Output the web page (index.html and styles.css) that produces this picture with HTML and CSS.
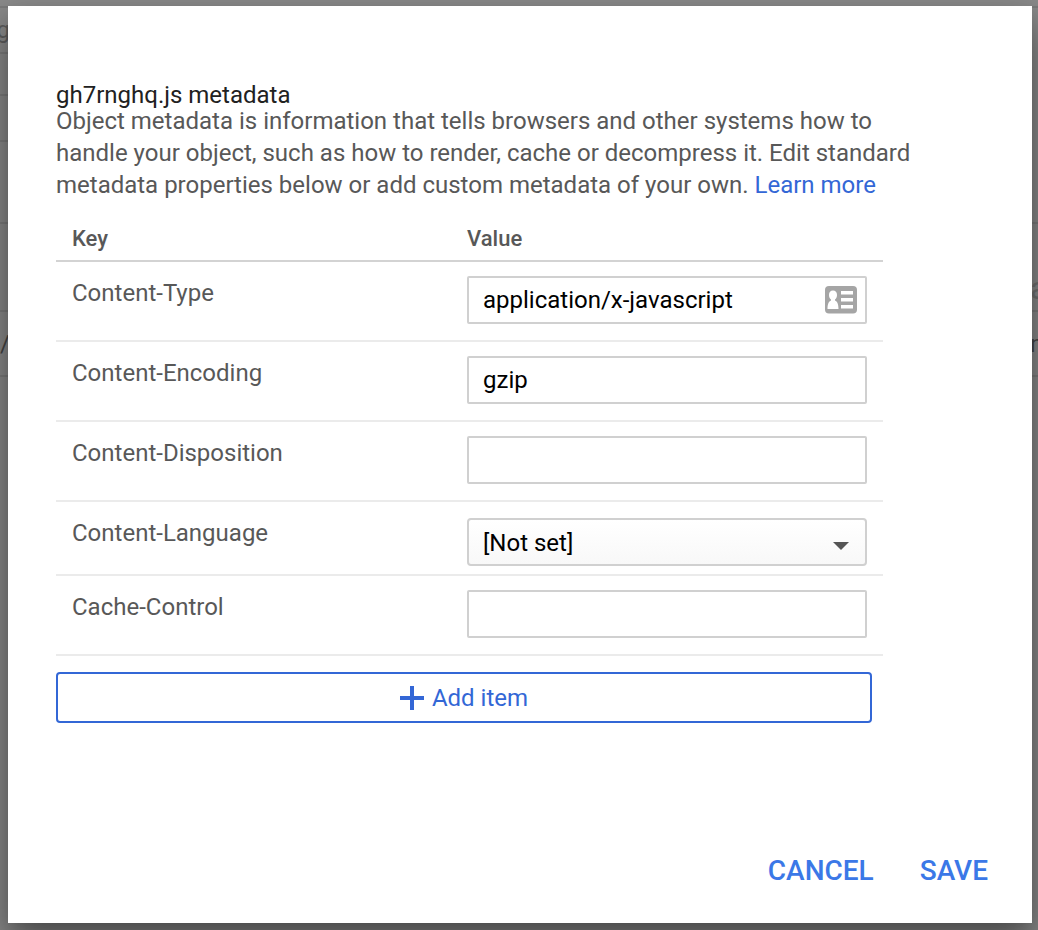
FILE: index.html
```html
<!DOCTYPE html>
<html lang="en">
<head>
<meta charset="utf-8">
<title>Object metadata</title>
<link rel="stylesheet" href="styles.css">
</head>
<body>
<div class="backdrop" aria-hidden="true">
  <div class="line top"></div>
  <div class="line crumb"><span>g</span></div>
  <div class="line tabs"></div>
  <div class="line tools"></div>
  <div class="line filter"></div>
  <div class="line head"><span></span><span class="faint">a</span></div>
  <div class="line item"><span>n/</span><span>nt</span></div>
</div>
<main class="dialog" role="dialog" aria-labelledby="title">
  <form class="form">
    <h1 class="title" id="title">gh7rnghq.js metadata</h1>
    <p class="description">Object metadata is information that tells browsers and other systems how to handle your object, such as how to render, cache or decompress it. Edit standard metadata properties below or add custom metadata of your own. <a class="link" href="#">Learn more</a></p>
    <table class="metadata">
      <thead>
        <tr><th class="key-column">Key</th><th>Value</th></tr>
      </thead>
      <tbody>
        <tr>
          <td><label for="type">Content-Type</label></td>
          <td>
            <div class="field">
              <input class="input" id="type" type="text" value="application/x-javascript">
              <svg class="card-icon" width="32" height="28" viewBox="0 0 32 28" aria-hidden="true">
                <rect width="32" height="27.500" rx="4" fill="#a5a5a5"/>
                <path d="M8 4.500C5.500 4.500 4 6.200 4 9C4 11 4.800 12.500 6 13.500V14.500C3.700 15.500 2.500 18 2.500 23H13.500C13.500 18 12.300 15.500 10 14.500V13.500C11.200 12.500 12 11 12 9C12 6.200 10.500 4.500 8 4.500Z" fill="#fff"/>
                <path d="M16 5H28V8.500H16ZM16 12H28V15.500H16ZM16 19H28V22.500H16Z" fill="#fff"/>
              </svg>
            </div>
          </td>
        </tr>
        <tr>
          <td><label for="encoding">Content-Encoding</label></td>
          <td><div class="field"><input class="input" id="encoding" type="text" value="gzip"></div></td>
        </tr>
        <tr>
          <td><label for="disposition">Content-Disposition</label></td>
          <td><div class="field"><input class="input" id="disposition" type="text"></div></td>
        </tr>
        <tr>
          <td><label for="language">Content-Language</label></td>
          <td class="select-cell">
            <div class="field">
              <select class="input select" id="language"><option>[Not set]</option></select>
              <svg class="arrow" width="16" height="8" viewBox="0 0 16 8" aria-hidden="true"><path d="M0 0H16L8 8Z" fill="#555"/></svg>
            </div>
          </td>
        </tr>
        <tr>
          <td><label for="cache">Cache-Control</label></td>
          <td><div class="field"><input class="input" id="cache" type="text"></div></td>
        </tr>
      </tbody>
    </table>
    <button class="add" type="button">
      <svg width="24" height="24" viewBox="0 0 24 24" aria-hidden="true"><path d="M10 0H14V10H24V14H14V24H10V14H0V10H10Z" fill="#3367d6"/></svg>
      <span>Add item</span>
    </button>
  </form>
  <div class="actions">
    <button class="action" type="button">CANCEL</button>
    <button class="action" type="button">SAVE</button>
  </div>
</main>
</body>
</html>
```
FILE: styles.css
```css
* {
  box-sizing: border-box;
}

body {
  margin: 0;
  min-height: 100vh;
  padding: 6px 6px 7px 8px;
  display: flex;
  background: #888;
  color: #585858;
  font: 24px/32px Roboto, sans-serif;
  overflow: hidden;
}

.backdrop {
  position: absolute;
  inset: 0;
  overflow: hidden;
  color: #444;
}

.line {
  display: flex;
  justify-content: space-between;
  align-items: center;
  border-bottom: 2px solid #7a7a7a;
}

.line span {
  width: 10px;
  display: flex;
  justify-content: flex-end;
}

.line span + span {
  width: 8px;
  justify-content: flex-start;
}

.line .faint {
  color: #707070;
  font-size: 32px;
}

.top { height: 8px; }
.crumb { height: 46px; width: 50%; color: #5c5c5c; }
.tabs { height: 42px; width: 50%; }
.tools { height: 46px; width: 50%; }
.filter { height: 82px; }
.head { height: 88px; align-items: flex-end; padding-bottom: 6px; }
.item { height: 65px; }

.dialog {
  position: relative;
  flex: 1;
  display: flex;
  flex-direction: column;
  justify-content: space-between;
  padding: 79px 36px 32px 48px;
  background: #fff;
  box-shadow: 0 20px 36px rgba(0, 0, 0, 0.4), 0 8px 16px rgba(0, 0, 0, 0.1);
}

.form {
  padding-right: 76px;
}

.title {
  margin: 0;
  color: #212121;
  font-size: 24px;
  font-weight: 400;
  line-height: 20px;
}

.description {
  margin: 0;
}

.link {
  color: #3367d6;
  text-decoration: none;
}

.metadata {
  width: calc(100% - 37px);
  margin-top: 17px;
  border-collapse: separate;
  border-spacing: 0;
  table-layout: fixed;
}

.metadata th {
  height: 44px;
  padding: 0 16px;
  border-bottom: 2px solid #d3d3d3;
  font-size: 22px;
  font-weight: 500;
  text-align: left;
}

.metadata .key-column {
  width: 395px;
}

.metadata td {
  padding: 15px 16px 0;
  border-bottom: 2px solid #ebebeb;
  vertical-align: top;
}

.metadata td + td {
  padding: 14px 16px 16px;
}

.metadata .select-cell.select-cell {
  padding: 16px 16px 8px;
}

.field {
  display: flex;
  position: relative;
}

.input {
  width: 100%;
  height: 48px;
  padding: 0 14px;
  border: 2px solid #d0d0d0;
  border-radius: 2px;
  background: #fff;
  color: #000;
  font: inherit;
}

.select {
  appearance: none;
  padding-top: 2px;
  border-radius: 4px;
  background: linear-gradient(#fff, #f8f8f8);
}

.card-icon {
  position: absolute;
  right: 10px;
  top: 10px;
}

.arrow {
  position: absolute;
  right: 18px;
  top: 24px;
}

.add {
  width: calc(100% - 48px);
  height: 51px;
  margin-top: 16px;
  padding: 0;
  display: flex;
  align-items: center;
  justify-content: center;
  gap: 8px;
  border: 2px solid #3367d6;
  border-radius: 4px;
  background: #fff;
  color: #3367d6;
  font: inherit;
}

.actions {
  display: flex;
  justify-content: flex-end;
  gap: 30px;
}

.action {
  padding: 0 8px;
  border: 0;
  background: none;
  color: #3b78e7;
  font: 500 28px/40px Roboto, sans-serif;
}
```
